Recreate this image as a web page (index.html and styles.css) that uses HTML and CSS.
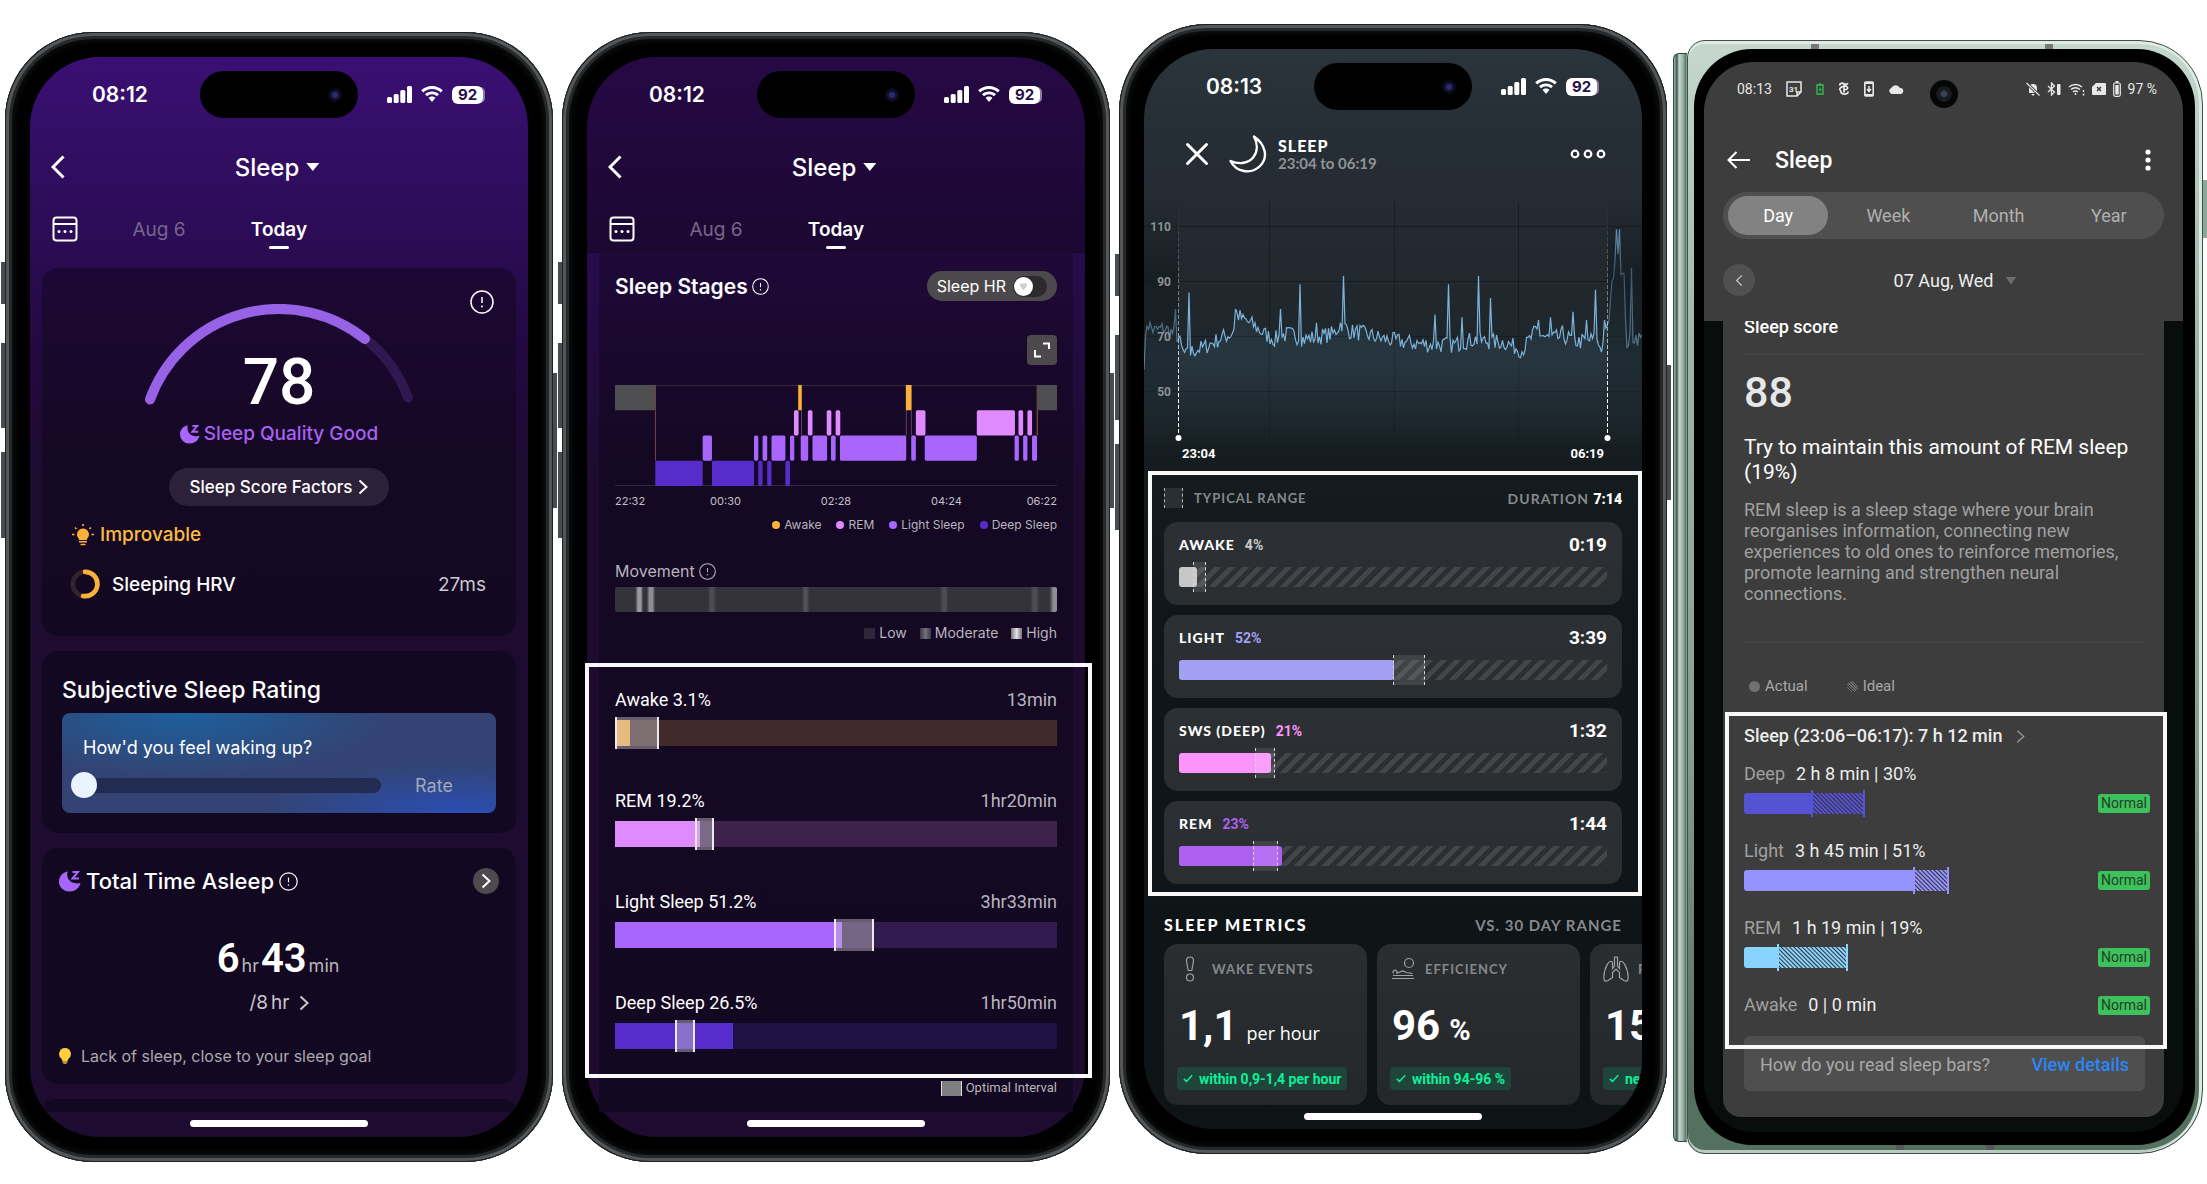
FILE: index.html
```html
<!DOCTYPE html>
<html lang="en">
<head>
  <meta charset="UTF-8">
  <meta name="viewport" content="width=device-width, initial-scale=1.0">
  <title>Sleep tracking comparison</title>
  <link rel="stylesheet" href="styles.css">
</head>
<body>
  <!-- Shared icons -->
  <svg class="sprite" aria-hidden="true">
    <symbol id="signal" viewBox="0 0 25 17">
      <rect x="0" y="11" width="5" height="6" rx="1.5"/><rect x="6.700" y="8" width="5" height="9" rx="1.5"/><rect x="13.300" y="4" width="5" height="13" rx="1.5"/><rect x="20" y="0" width="5" height="17" rx="1.5"/>
    </symbol>
    <symbol id="wifi" viewBox="0 0 22 17">
      <path d="M11 0C6.800 0 3 1.600.200 4.300l2 2.100C4.500 4.200 7.600 2.900 11 2.900s6.500 1.300 8.800 3.500l2-2.100C19 1.600 15.200 0 11 0z"/>
      <path d="M11 5.400c-2.700 0-5.200 1-7 2.800l2.100 2.100c1.300-1.200 3-2 4.900-2s3.600.800 4.900 2L18 8.200c-1.800-1.800-4.300-2.800-7-2.800z"/>
      <path d="M11 10.600c-1.300 0-2.500.500-3.300 1.400L11 16l3.300-4c-.800-.900-2-1.400-3.300-1.400z"/>
    </symbol>
    <symbol id="info" viewBox="0 0 24 24">
      <circle cx="12" cy="12" r="11" fill="none" stroke="currentColor" stroke-width="1.500"/><path d="M12 7v6" stroke="currentColor" stroke-width="1.500"/><circle cx="12" cy="16.500" r="1" fill="currentColor"/>
    </symbol>
    <symbol id="chevron" viewBox="0 0 10 16">
      <path d="M1.500 1.500L8.500 8l-7 6.500" fill="none" stroke="currentColor" stroke-width="2"/>
    </symbol>
    <symbol id="back" viewBox="0 0 14 24">
      <path d="M12.500 1.500L2 12l10.500 10.500" fill="none" stroke="currentColor" stroke-width="3"/>
    </symbol>
    <symbol id="calendar" viewBox="0 0 26 26">
      <rect x="1.500" y="1.500" width="23" height="23" rx="3" fill="none" stroke="currentColor" stroke-width="2"/><path d="M2 8h22" stroke="currentColor" stroke-width="2"/>
      <circle cx="7" cy="15.500" r="1.500" fill="currentColor"/><circle cx="13" cy="15.500" r="1.500" fill="currentColor"/><circle cx="19" cy="15.500" r="1.500" fill="currentColor"/>
    </symbol>
    <symbol id="moon-z" viewBox="0 0 22 22">
      <path d="M8.500 1.500C3.500 2.500 0 6.500 0 11.500A10 10 0 0 0 10.500 21.500c5.500 0 9.500-3 11-8.500-6 1.500-15-1-13-11.500z" fill="currentColor"/><path d="M13.500 2h5.500l-5.500 6.500H20" fill="none" stroke="currentColor" stroke-width="2"/>
    </symbol>
    <symbol id="tick" viewBox="0 0 12 10">
      <path d="M1 5.500L4.200 8.500 11 1" fill="none" stroke="currentColor" stroke-width="1.800"/>
    </symbol>
  </svg>

  <main class="gallery">

    <!-- Phone 1: score -->
    <article class="phone">
      <div class="screen screen-violet clip">
        <div class="status">
          <span class="clock">08:12</span>
          <span class="island"><i class="lens"></i></span>
          <span class="status-icons">
            <svg class="ic-signal"><use href="#signal"/></svg>
            <svg class="ic-wifi"><use href="#wifi"/></svg>
            <span class="battery">92</span>
          </span>
        </div>
        <header class="nav">
          <button class="plain" aria-label="Back"><svg class="ic-back"><use href="#back"/></svg></button>
          <h1><button class="plain nav-title">Sleep <i class="caret"></i></button></h1>
        </header>
        <nav class="days">
          <button class="plain" aria-label="Calendar"><svg class="ic-calendar"><use href="#calendar"/></svg></button>
          <a href="#" class="day">Aug 6</a>
          <a href="#" class="day day-active">Today</a>
        </nav>

        <div class="cards">
          <section class="card score-card">
            <button class="plain score-info" aria-label="About the score"><svg class="ic-info-l"><use href="#info"/></svg></button>
            <svg class="gauge" viewBox="0 0 270 102">
              <path d="M6 95.500A137.500 137.500 0 0 1 264 93.500" stroke="#2f1750"/>
              <path d="M6 95.500A137.500 137.500 0 0 1 221 35" stroke="#9862e6"/>
            </svg>
            <strong class="score">78</strong>
            <p class="quality"><svg class="ic-moon"><use href="#moon-z"/></svg>Sleep Quality Good</p>
            <button class="factors">Sleep Score Factors <svg class="ic-chevron"><use href="#chevron"/></svg></button>
            <p class="improve">
              <svg class="ic-bulb" viewBox="0 0 22 22"><path d="M11 4.500a6 6 0 0 0-4 10.400V16h8v-1.100a6 6 0 0 0-4-10.400z" fill="#fbb03b"/><path d="M7 17.800h8M8.500 20.500h5M0 10.500h2.500M19.500 10.500H22M3 3.500l1.500 1.500M19 3.500L17.500 5M11 0v2" stroke="#fbb03b" stroke-width="1.600"/></svg>
              Improvable
            </p>
            <p class="hrv">
              <svg class="ic-ring" viewBox="0 0 32 32" fill="none" stroke-width="5"><circle cx="16" cy="16" r="13" stroke="#32242a"/><path d="M16 3a13 13 0 1 1-2 25.800" stroke="#fbb03b" stroke-linecap="round"/></svg>
              <span>Sleeping HRV</span>
              <span class="hrv-value">27ms</span>
            </p>
          </section>

          <section class="card rating-card">
            <h2>Subjective Sleep Rating</h2>
            <form class="rating">
              <label for="waking">How'd you feel waking up?</label>
              <div class="rating-row">
                <input type="range" id="waking" min="0" max="10" value="0">
                <button type="button" class="plain rate">Rate</button>
              </div>
            </form>
          </section>

          <section class="card asleep-card">
            <div class="asleep-head">
              <svg class="ic-moon"><use href="#moon-z"/></svg>
              <h2>Total Time Asleep</h2>
              <svg class="ic-info-m"><use href="#info"/></svg>
              <button class="more" aria-label="Open"><svg class="ic-chevron"><use href="#chevron"/></svg></button>
            </div>
            <p class="asleep"><b>6</b><small>hr</small><b>43</b><small>min</small></p>
            <p class="goal">/8<span>hr</span><svg class="ic-chevron"><use href="#chevron"/></svg></p>
            <p class="tip"><svg class="ic-tip" viewBox="0 0 12 16"><path d="M6 0a6 6 0 0 0-3.500 10.800L3.500 13h5l1-2.200A6 6 0 0 0 6 0z" fill="#ffcf3e"/><path d="M3.500 13h5v1.500L7 16H5l-1.500-1.500z" fill="#c98b35"/></svg>Lack of sleep, close to your sleep goal</p>
          </section>
          <section class="card card-stub"></section>
        </div>
        <div class="home"></div>
      </div>
    </article>

    <!-- Phone 2: stages -->
    <article class="phone">
      <div class="screen screen-dark-violet">
        <div class="status">
          <span class="clock">08:12</span>
          <span class="island"><i class="lens"></i></span>
          <span class="status-icons">
            <svg class="ic-signal"><use href="#signal"/></svg>
            <svg class="ic-wifi"><use href="#wifi"/></svg>
            <span class="battery">92</span>
          </span>
        </div>
        <header class="nav">
          <button class="plain" aria-label="Back"><svg class="ic-back"><use href="#back"/></svg></button>
          <h1><button class="plain nav-title">Sleep <i class="caret"></i></button></h1>
        </header>
        <nav class="days">
          <button class="plain" aria-label="Calendar"><svg class="ic-calendar"><use href="#calendar"/></svg></button>
          <a href="#" class="day">Aug 6</a>
          <a href="#" class="day day-active">Today</a>
        </nav>

        <div class="sheet-wrap">
          <section class="sheet">
            <div class="sheet-head">
              <h2>Sleep Stages</h2>
              <svg class="ic-info-s"><use href="#info"/></svg>
              <label class="hr-toggle" for="hr">Sleep HR <input type="checkbox" id="hr"></label>
            </div>
            <button class="expand" aria-label="Expand chart"><svg viewBox="0 0 16 16"><path d="M9 1.500h6V7M1 8v6.500h6" fill="none" stroke="#fff" stroke-width="2"/></svg></button>
            <svg id="hypnogram" class="hypnogram" viewBox="0 0 1240 248" preserveAspectRatio="none"></svg>
            <div class="times"><span>22:32</span><span>00:30</span><span>02:28</span><span>04:24</span><span>06:22</span></div>
            <ul class="legend">
              <li><i class="dot awake"></i>Awake</li>
              <li><i class="dot rem"></i>REM</li>
              <li><i class="dot light"></i>Light Sleep</li>
              <li><i class="dot deep"></i>Deep Sleep</li>
            </ul>
            <h3 class="movement-title">Movement <svg class="ic-info-s"><use href="#info"/></svg></h3>
            <div class="movement"></div>
            <ul class="legend legend-move">
              <li><i class="sq low"></i>Low</li>
              <li><i class="sq moderate"></i>Moderate</li>
              <li><i class="sq high"></i>High</li>
            </ul>

            <div class="frame frame-stages">
              <div class="stage">
                <span>Awake 3.1%</span><span class="stage-time">13min</span>
                <div class="bar bar-awake"><i class="fill" style="width: 3.3%"></i><i class="range" style="left: 0%; width: 10%"></i></div>
              </div>
              <div class="stage">
                <span>REM 19.2%</span><span class="stage-time">1hr20min</span>
                <div class="bar bar-rem"><i class="fill" style="width: 19.3%"></i><i class="range" style="left: 18.1%; width: 4.4%"></i></div>
              </div>
              <div class="stage">
                <span>Light Sleep 51.2%</span><span class="stage-time">3hr33min</span>
                <div class="bar bar-light"><i class="fill" style="width: 51.4%"></i><i class="range" style="left: 49.6%; width: 9%"></i></div>
              </div>
              <div class="stage">
                <span>Deep Sleep 26.5%</span><span class="stage-time">1hr50min</span>
                <div class="bar bar-deep"><i class="fill" style="width: 26.6%"></i><i class="range" style="left: 13.6%; width: 4.4%"></i></div>
              </div>
            </div>
            <p class="optimal"><i></i>Optimal Interval</p>
          </section>
        </div>
        <div class="home"></div>
      </div>
    </article>

    <!-- Phone 3: heart rate and metrics -->
    <article class="phone phone-raised">
      <div class="screen screen-slate clip">
        <div class="status">
          <span class="clock">08:13</span>
          <span class="island"><i class="lens"></i></span>
          <span class="status-icons">
            <svg class="ic-signal"><use href="#signal"/></svg>
            <svg class="ic-wifi"><use href="#wifi"/></svg>
            <span class="battery">92</span>
          </span>
        </div>
        <header class="activity">
          <button class="plain" aria-label="Close"><svg class="ic-close" viewBox="0 0 24 24"><path d="M2.500 2.500l19 19M21.500 2.500l-19 19" stroke="#fff" stroke-width="3" stroke-linecap="round"/></svg></button>
          <svg class="ic-crescent" viewBox="0 0 38 38"><path d="M25 1.500C36 9 40 22 31 31 22 40 7 37 1.500 26 11 30 20 28 24.500 22 29 16 28.500 8 25 1.500z" fill="none" stroke="#fff" stroke-width="2.400" stroke-linejoin="round"/></svg>
          <div>
            <h1>SLEEP</h1>
            <p>23:04 to 06:19</p>
          </div>
          <button class="plain menu" aria-label="Menu"><svg class="ic-dots" viewBox="0 0 36 10" fill="none" stroke="#fff" stroke-width="2.200"><circle cx="5" cy="5" r="3.300"/><circle cx="18" cy="5" r="3.300"/><circle cx="31" cy="5" r="3.300"/></svg></button>
        </header>
        <svg class="heart" viewBox="0 0 498 258">
          <defs>
            <linearGradient id="fade" gradientUnits="userSpaceOnUse" x1="0" y1="5" x2="0" y2="236"><stop offset="0" stop-color="#fff" stop-opacity="0"/><stop offset=".5" stop-color="#fff" stop-opacity=".5"/><stop offset=".8" stop-color="#fff"/></linearGradient>
            <linearGradient id="area" x1="0" y1="0" x2="0" y2="1"><stop offset="0" stop-color="#5f9cc4" stop-opacity=".02"/><stop offset=".6" stop-color="#5f9cc4" stop-opacity=".13"/><stop offset="1" stop-color="#5f9cc4" stop-opacity=".02"/></linearGradient>
            <linearGradient id="shade" x1="0" y1="0" x2="0" y2="1"><stop offset="0" stop-color="#12191d" stop-opacity="0"/><stop offset=".3" stop-color="#12191d" stop-opacity=".6"/><stop offset="1" stop-color="#12191d" stop-opacity=".1"/></linearGradient>
          </defs>
          <path class="grid" d="M0 24.500h498M0 79.500h498M0 134.500h498M0 189.500h498M125.500 0v242M250.500 0v242M374.500 0v242"/>
          <path id="heart-area" fill="url(#area)"/>
          <path id="heart-line" class="heart-line"/>
          <path d="M0 0h34v242H0zM464 0h34v242h-34z" fill="url(#shade)"/>
          <g class="axis"><text x="27" y="29">110</text><text x="27" y="84">90</text><text x="27" y="139">70</text><text x="27" y="194">50</text></g>
          <path class="mark" d="M34.500 5V236"/>
          <path class="mark" d="M463.500 5V236"/>
          <circle cx="34.500" cy="236" r="3" fill="#fff"/><circle cx="463.500" cy="236" r="3" fill="#fff"/>
          <text class="mark-time" x="38" y="256">23:04</text><text class="mark-time end" x="460" y="256">06:19</text>
        </svg>

        <section class="frame frame-typical">
          <div class="typical-head"><i class="swatch"></i><span>TYPICAL RANGE</span><span class="duration">DURATION <b>7:14</b></span></div>
          <div class="zone">
            <b class="zone-name">AWAKE</b><b class="pct pct-awake">4%</b><b class="zone-time">0:19</b>
            <div class="track"><i class="level level-awake" style="width: 4.2%"></i><i class="typical" style="left: 3.2%; width: 3%"></i></div>
          </div>
          <div class="zone">
            <b class="zone-name">LIGHT</b><b class="pct pct-light">52%</b><b class="zone-time">3:39</b>
            <div class="track"><i class="level level-light" style="width: 50.3%"></i><i class="typical" style="left: 49.9%; width: 7.5%"></i></div>
          </div>
          <div class="zone">
            <b class="zone-name">SWS (DEEP)</b><b class="pct pct-sws">21%</b><b class="zone-time">1:32</b>
            <div class="track"><i class="level level-sws" style="width: 21.4%"></i><i class="typical" style="left: 17.8%; width: 4.7%"></i></div>
          </div>
          <div class="zone">
            <b class="zone-name">REM</b><b class="pct pct-rem">23%</b><b class="zone-time">1:44</b>
            <div class="track"><i class="level level-rem" style="width: 24.1%"></i><i class="typical" style="left: 17.3%; width: 5.8%"></i></div>
          </div>
        </section>

        <section class="metrics">
          <div class="metrics-head"><h2>SLEEP METRICS</h2><span>VS. 30 DAY RANGE</span></div>
          <div class="metric-list">
            <div class="metric">
              <h3><svg viewBox="0 0 26 26"><path d="M13 1c-2.500 0-3.700 1.500-3.500 4l1.700 9.500h3.600L16.500 5c.200-2.500-1-4-3.500-4z"/><circle cx="13" cy="21.500" r="3.500"/></svg>WAKE EVENTS</h3>
              <p class="metric-value">1,1 <small>per hour</small></p>
              <span class="badge"><svg><use href="#tick"/></svg>within 0,9-1,4 per hour</span>
            </div>
            <div class="metric">
              <h3><svg viewBox="0 0 26 26"><circle cx="19" cy="7" r="4.500"/><path d="M2 22.500h22M3 19.500h20M3.500 17.500a2 2 0 1 1 3 0l6-2.500 4 1.500 6 1"/></svg>EFFICIENCY</h3>
              <p class="metric-value">96 <small class="unit">%</small></p>
              <span class="badge"><svg><use href="#tick"/></svg>within 94-96 %</span>
            </div>
            <div class="metric">
              <h3><svg viewBox="0 0 26 26"><path d="M11.500 1v9l-2 2.500V7c0-2.500-3-2.500-5 1C2 12.500.500 18 1 23c.200 2.500 2 2.500 4 1.500l4.500-3v-5l3.500-3.500 3.500 3.500v5l4.500 3c2 1 3.800 1 4-1.500.500-5-1-10.500-3.500-15-2-3.500-5-3.500-5-1v5.500l-2-2.500V1z"/></svg>RESP. RATE</h3>
              <p class="metric-value">15</p>
              <span class="badge"><svg><use href="#tick"/></svg>near</span>
            </div>
          </div>
        </section>
        <div class="home"></div>
      </div>
    </article>

    <!-- Phone 4: foldable -->
    <article class="fold">
      <div class="hinge"></div>
      <div class="fold-body">
        <div class="bezel">
          <div class="fold-screen">
            <header class="fold-top">
              <div class="fold-status">
                <span>08:13</span>
                <svg viewBox="0 0 16 16" class="fs fs-cal"><path d="M1 1h14v10l-4 4H1zM15 11h-4v4" fill="none" stroke="#e8e8e8" stroke-width="1.500"/><text x="3" y="11" font-size="8" font-weight="700" fill="#e8e8e8">31</text></svg>
                <svg viewBox="0 0 8 12" class="fs fs-charge"><path d="M1 2h6v9H1zM3 1h2" fill="none" stroke="#35c24f" stroke-width="1.300"/><path d="M5 3.500L2.500 7H4l-.500 2.500L6 6H4.500z" fill="#35c24f"/></svg>
                <svg viewBox="0 0 12 16" class="fs fs-t" fill="none" stroke="#e8e8e8" stroke-width="2"><path d="M1 4c0-3 3-3 5-2s4 1 4-1M1 9c0-3 3-4 8-4.500M6 3v9M2 9c0 6 8 6 9 2M9 5c3 3-1 4-3 4"/></svg>
                <svg viewBox="0 0 10 16" class="fs fs-phone"><rect x=".800" y="1" width="8.400" height="14" rx="1" fill="none" stroke="#e8e8e8" stroke-width="1.600"/><path d="M5 5v5M3 8l2 2.500L7 8" fill="none" stroke="#e8e8e8" stroke-width="1.500"/><path d="M1 1h8v2H1zM1 13h8v2H1z" fill="#e8e8e8"/></svg>
                <svg viewBox="0 0 16 10" class="fs fs-cloud"><path d="M3.500 10a3.200 3.200 0 0 1-.300-6A5 5 0 0 1 12 4a3 3 0 0 1 .500 6z" fill="#e8e8e8"/></svg>
                <i class="punch"></i>
                <span class="fold-status-right">
                  <svg viewBox="0 0 14 14" class="fs fs-bell"><path d="M3 11V6c0-2.500 1.500-4 4-4s4 1.500 4 4v5zM5.500 12h3a1.500 1.500 0 0 1-3 0z" fill="#e8e8e8"/><path d="M.500 1l13 12.500" stroke="#3d3d3d" stroke-width="3"/><path d="M.500 1l13 12.500" stroke="#e8e8e8" stroke-width="1.200"/></svg>
                  <svg viewBox="0 0 14 14" class="fs fs-bt"><path d="M1 4l6.500 6L4.500 13V1l3 3L1 10" fill="none" stroke="#e8e8e8" stroke-width="1.300"/><rect x="10" y="2" width="3.500" height="11" rx="1" fill="#e8e8e8"/></svg>
                  <svg viewBox="0 0 17 14" class="fs fs-wifi" fill="none" stroke="#e8e8e8" stroke-width="1.500"><path d="M1 5a10 10 0 0 1 13 0M3 7.500a7 7 0 0 1 9 0M5 10a4 4 0 0 1 5 0"/><path d="M7.500 11v2M15.500 8v2M15.500 11.500v2"/></svg>
                  <svg viewBox="0 0 14 12" class="fs fs-sim"><path d="M4 0h9a1 1 0 0 1 1 1v10a1 1 0 0 1-1 1H1a1 1 0 0 1-1-1V4z" fill="#e8e8e8"/><path d="M5 4l4 4M9 4L5 8" stroke="#3d3d3d" stroke-width="1.500"/></svg>
                  <svg viewBox="0 0 8 16" class="fs fs-batt"><rect x=".700" y="2" width="6.600" height="13.300" rx="1.500" fill="none" stroke="#e8e8e8" stroke-width="1.200"/><path d="M2.300 4h3.400v9.500H2.300zM2.500 0h3v2h-3z" fill="#e8e8e8"/></svg>
                  97 %
                </span>
              </div>
              <div class="fold-nav">
                <button class="plain" aria-label="Back"><svg class="ic-arrow" viewBox="0 0 23 18"><path d="M23 9H1.500M9.500 1L1.500 9l8 8" fill="none" stroke="#fff" stroke-width="2"/></svg></button>
                <h1>Sleep</h1>
                <button class="plain kebab" aria-label="More"><svg viewBox="0 0 6 22" fill="#fff"><circle cx="3" cy="3" r="2.600"/><circle cx="3" cy="11" r="2.600"/><circle cx="3" cy="19" r="2.600"/></svg></button>
              </div>
              <div class="segments">
                <button class="segment-active">Day</button>
                <button>Week</button>
                <button>Month</button>
                <button>Year</button>
              </div>
              <div class="date-row">
                <button class="prev" aria-label="Previous day"><svg viewBox="0 0 10 16"><path d="M8.500 1.500L2 8l6.500 6.500" fill="none" stroke="#ccc" stroke-width="1.500"/></svg></button>
                <button class="plain date">07 Aug, Wed <i></i></button>
              </div>
            </header>
            <section class="report">
              <div class="report-head"><h2>Sleep score</h2></div>
              <hr>
              <strong class="report-score">88</strong>
              <h3>Try to maintain this amount of REM sleep (19%)</h3>
              <p class="report-text">REM sleep is a sleep stage where your brain reorganises information, connecting new experiences to old ones to reinforce memories, promote learning and strengthen neural connections.</p>
              <hr class="hr-low">
              <ul class="report-legend"><li><i></i>Actual</li><li><i class="ideal"></i>Ideal</li></ul>
              <div class="frame frame-bars">
                <h4><a href="#">Sleep (23:06–06:17): 7 h 12 min <svg viewBox="0 0 10 16"><path d="M1.500 1.500L8.500 8l-7 6.500" fill="none" stroke="#999" stroke-width="1.500"/></svg></a></h4>
                <div class="phase phase-deep">
                  <p><span>Deep</span>2 h 8 min | 30%</p>
                  <div class="phase-bar"><i class="actual" style="width: 16.7%"></i><i class="hatch" style="width: 13%"></i><em>Normal</em></div>
                </div>
                <div class="phase phase-light">
                  <p><span>Light</span>3 h 45 min | 51%</p>
                  <div class="phase-bar"><i class="actual" style="width: 41.9%"></i><i class="hatch" style="width: 8.7%"></i><em>Normal</em></div>
                </div>
                <div class="phase phase-rem">
                  <p><span>REM</span>1 h 19 min | 19%</p>
                  <div class="phase-bar"><i class="actual" style="width: 8.4%"></i><i class="hatch" style="width: 17.1%"></i><em>Normal</em></div>
                </div>
                <div class="phase phase-awake">
                  <p><span>Awake</span>0 | 0 min</p><em>Normal</em>
                </div>
              </div>
              <div class="help"><span>How do you read sleep bars?</span><a href="#">View details</a></div>
            </section>
          </div>
        </div>
      </div>
    </article>
  </main>

  <script src="charts.js"></script>
</body>
</html>
```

FILE: styles.css
```css
* {
  box-sizing: border-box;
}

body {
  margin: 0;
  background: #fff;
  color: #fff;
  font-family: Inter, sans-serif;
}

h1, h2, h3, h4, p, ul {
  margin: 0;
  padding: 0;
  font-weight: 500;
}

ul {
  list-style: none;
}

a {
  color: inherit;
  text-decoration: none;
}

i, em {
  font-style: normal;
}

svg {
  display: block;
  flex: none;
}

button {
  font: inherit;
  color: inherit;
  border: none;
  cursor: pointer;
}

.plain {
  padding: 0;
  background: none;
}

.sprite {
  position: absolute;
  width: 0;
  height: 0;
}

.gallery {
  display: grid;
  grid-template-columns: 548fr 548fr 548fr 527fr;
  gap: 9px;
  align-items: start;
  padding: 32px 4px 22px 5px;
}

/* Phone body */
.phone {
  position: relative;
  min-width: 0;
  padding: 25px;
  border-radius: 88px;
  background: #000;
  box-shadow: inset 0 0 0 1px #1d1f20, inset 0 0 0 4px #55585a, inset 0 0 0 7px #26292a, inset 0 0 6px 9px #101112;
}

.phone::before, .phone::after {
  content: "";
  position: absolute;
  width: 4px;
}

.phone::before {
  left: -4px;
  top: 230px;
  height: 276px;
  background: linear-gradient(#4a4d4f 0 42px, transparent 42px 81px, #4a4d4f 81px 166px, transparent 166px 190px, #4a4d4f 190px);
}

.phone::after {
  right: -4px;
  top: 341px;
  height: 135px;
  background: #4a4d4f;
}

.phone-raised {
  margin-top: -8px;
}

.screen {
  position: relative;
  padding: 14px 0 10px;
  border-radius: 70px;
}

.clip {
  overflow: hidden;
}

.screen-violet {
  background: linear-gradient(#3a0f73, #2b0c55 180px, #22093f 300px, #1d0c30 420px);
}

.screen-dark-violet {
  background: linear-gradient(#260945, #1b0831 196px, #270c4c 196px, #1d0c30 420px);
}

.screen-slate {
  padding-bottom: 9px;
  background: linear-gradient(#2a343b, #252c33 120px, #1d252a 340px, #161d20 400px, #10161a 560px, #0e1315);
}

.status {
  display: grid;
  grid-template-columns: 1fr 158px 1fr;
  height: 47px;
  align-items: center;
}

.clock {
  padding-left: 62px;
  font-size: 21px;
  font-weight: 600;
}

.island {
  display: flex;
  align-items: center;
  justify-content: flex-end;
  height: 47px;
  padding-right: 16px;
  border-radius: 24px;
  background: #000;
}

.lens {
  width: 14px;
  height: 14px;
  border-radius: 50%;
  background: radial-gradient(#2d2a78 0 2px, #11102c 4px, #08080f 7px);
}

.status-icons {
  display: flex;
  align-items: center;
  gap: 9px;
  padding-left: 29px;
  fill: #fff;
}

.ic-signal {
  width: 25px;
  height: 17px;
}

.ic-wifi {
  width: 22px;
  height: 17px;
}

.battery {
  width: 31px;
  height: 18px;
  border-radius: 6px;
  background: #fff;
  box-shadow: 3px 0 0 -1px #8b7a9f;
  color: #25104a;
  font-size: 15px;
  font-weight: 700;
  line-height: 18px;
  text-align: center;
}

.nav {
  display: grid;
  grid-template-columns: 60px 1fr 60px;
  align-items: center;
  height: 40px;
  margin-top: 29px;
}

.nav > .plain {
  padding-left: 21px;
}

.ic-back {
  width: 14px;
  height: 24px;
}

.nav h1 {
  padding-right: 4px;
  text-align: center;
  font-size: 24px;
}

.nav-title {
  display: inline-flex;
  align-items: center;
  gap: 7px;
}

.caret {
  width: 13px;
  height: 8px;
  background: #fff;
  clip-path: polygon(0 0, 100% 0, 50% 100%);
}

.days {
  display: grid;
  grid-template-columns: 66px 126px 1fr 192px;
  align-items: center;
  height: 48px;
  margin-top: 18px;
  font-size: 19px;
  text-align: center;
}

.days .plain {
  padding-left: 22px;
}

.ic-calendar {
  width: 26px;
  height: 26px;
}

.day {
  color: #766689;
}

.day-active {
  position: relative;
  color: #fff;
  font-weight: 600;
}

.day-active::after {
  content: "";
  position: absolute;
  left: calc(50% - 10px);
  bottom: -8px;
  width: 20px;
  height: 3px;
  border-radius: 2px;
  background: #fff;
}

.home {
  width: 178px;
  height: 7px;
  margin: 8px auto 0;
  border-radius: 4px;
  background: #fff;
}

/* Phone 1 */
.cards {
  display: flex;
  flex-direction: column;
  gap: 15px;
  padding: 15px 12px 0;
}

.card {
  position: relative;
  padding: 20px;
  border-radius: 16px;
  background: #130821;
}

.card h2 {
  font-size: 22px;
  line-height: 28px;
}

.score-card {
  display: flex;
  flex-direction: column;
  align-items: center;
  padding: 36px 30px;
  background: linear-gradient(#1d0835, #150824 180px, #130821);
}

.score-info {
  position: absolute;
  top: 22px;
  right: 22px;
}

.ic-info-l {
  width: 24px;
  height: 24px;
}

.ic-info-m {
  width: 19px;
  height: 19px;
}

.ic-info-s {
  width: 17px;
  height: 17px;
}

.gauge {
  width: 270px;
  height: 102px;
  fill: none;
  stroke-width: 10;
  stroke-linecap: round;
}

.score {
  margin-top: -54px;
  font-family: Roboto, sans-serif;
  font-size: 64px;
  font-weight: 500;
  line-height: 62px;
}

.quality {
  display: flex;
  align-items: center;
  gap: 4px;
  margin-top: 8px;
  color: #a862f3;
  font-size: 19px;
  line-height: 24px;
}

.quality .ic-moon {
  width: 20px;
  height: 20px;
}

.ic-moon {
  width: 22px;
  height: 22px;
  color: #a866ff;
}

.ic-chevron {
  width: 10px;
  height: 16px;
}

.factors {
  display: flex;
  align-items: center;
  justify-content: center;
  gap: 6px;
  width: 220px;
  height: 38px;
  margin-top: 22px;
  padding: 0;
  border-radius: 19px;
  background: #2c2139;
  font-size: 17px;
  font-weight: 500;
}

.improve, .hrv {
  display: flex;
  align-self: stretch;
  align-items: center;
  font-size: 19px;
}

.improve {
  gap: 6px;
  margin-top: 17px;
  color: #fbbc3f;
  line-height: 24px;
}

.ic-bulb {
  width: 22px;
  height: 22px;
}

.hrv {
  gap: 12px;
  height: 32px;
  margin: 21px 0 0 -2px;
}

.ic-ring {
  width: 30px;
  height: 30px;
}

.hrv-value {
  margin-left: auto;
  color: #ccc8d0;
  font-weight: 400;
}

.rating-card {
  padding-top: 25px;
}

.rating-card h2 {
  font-size: 23px;
}

.rating {
  margin-top: 9px;
  padding: 23px 9px 15px;
  border-radius: 8px;
  background:
    radial-gradient(ellipse at 28% 0, #1c609d, transparent 45%),
    radial-gradient(ellipse at 92% 100%, #2a4fb4, transparent 35%),
    #334474;
  font-size: 18px;
}

.rating label {
  display: block;
  padding-left: 12px;
  line-height: 24px;
}

.rating-row {
  display: grid;
  grid-template-columns: 310px 1fr;
  align-items: center;
  margin-top: 12px;
}

.rating input {
  appearance: none;
  width: 100%;
  height: 26px;
  margin: 0;
  background: none;
}

.rating input::-webkit-slider-runnable-track {
  height: 15px;
  border-radius: 8px;
  background: #222c52;
}

.rating input::-webkit-slider-thumb {
  appearance: none;
  width: 26px;
  height: 26px;
  margin-top: -6px;
  border-radius: 50%;
  background: #e9f4ff;
}

.rate {
  color: #a2a8b6;
}

.asleep-card {
  padding: 19px 17px 16px;
}

.asleep-head {
  display: flex;
  align-items: center;
  gap: 5px;
}

.more {
  display: grid;
  place-items: center;
  width: 26px;
  height: 26px;
  margin-left: auto;
  padding: 0;
  border-radius: 50%;
  background: #4c4a4c;
}

.asleep {
  height: 48px;
  margin-top: 40px;
  line-height: 48px;
  text-align: center;
}

.asleep b {
  font-family: Roboto, sans-serif;
  font-size: 40px;
  font-weight: 600;
}

.asleep small {
  padding: 0 2px;
  color: #b9b5bd;
  font-size: 18px;
  font-weight: 400;
}

.goal {
  display: flex;
  align-items: center;
  justify-content: center;
  gap: 3px;
  margin-top: 8px;
  color: #c9c6cc;
  font-size: 19px;
  font-weight: 400;
  line-height: 24px;
}

.goal svg {
  margin-left: 6px;
}

.tip {
  display: flex;
  align-items: center;
  gap: 10px;
  margin-top: 29px;
  color: #aca8b0;
  font-size: 16px;
  font-weight: 400;
  line-height: 24px;
}

.ic-tip {
  width: 12px;
  height: 16px;
}

.card-stub {
  height: 13px;
  padding: 0;
  border-radius: 16px 16px 0 0;
}

/* Phone 2 */
.sheet-wrap {
  padding: 0 12px;
}

.sheet {
  padding: 18px 16px 15px;
  background: linear-gradient(#1e0938, #150824 200px, #130821);
}

.sheet-head {
  display: flex;
  align-items: center;
  gap: 4px;
  height: 30px;
}

.sheet-head h2 {
  font-size: 21px;
  font-weight: 600;
}

.hr-toggle {
  display: flex;
  align-items: center;
  gap: 7px;
  height: 30px;
  margin-left: auto;
  padding: 0 10px;
  border-radius: 15px;
  background: #4b494c;
  font-size: 16px;
}

.hr-toggle input {
  appearance: none;
  width: 34px;
  height: 21px;
  margin: 0;
  padding: 1px;
  border-radius: 11px;
  background: #2c2a2d;
}

.hr-toggle input::before {
  content: "♥";
  display: block;
  width: 19px;
  height: 19px;
  border-radius: 50%;
  background: #fff;
  color: #d0cfd0;
  font-size: 14px;
  line-height: 19px;
  text-align: center;
}

.expand {
  display: grid;
  place-items: center;
  width: 30px;
  height: 30px;
  margin: 34px 0 20px auto;
  padding: 0;
  border-radius: 4px;
  background: #4b494c;
}

.expand svg {
  width: 16px;
  height: 16px;
}

.hypnogram {
  width: 100%;
  height: 101px;
}

.times {
  display: grid;
  grid-template-columns: 1fr 2fr 2fr 2fr 1fr;
  margin-top: 7px;
  color: #c4c0c8;
  font-size: 11px;
  line-height: 16px;
  text-align: center;
}

.times span:first-child {
  text-align: left;
}

.times span:last-child {
  text-align: right;
}

.legend {
  display: flex;
  justify-content: flex-end;
  gap: 15px;
  margin-top: 7px;
  color: #b9b5bd;
  font-size: 12px;
  line-height: 18px;
}

.legend li {
  display: flex;
  align-items: center;
  gap: 4px;
  font-weight: 400;
}

.dot {
  width: 8px;
  height: 8px;
  border-radius: 50%;
}

.awake { background: #fbb03b; }
.rem { background: #e08aff; }
.light { background: #a866ff; }
.deep { background: #562dcb; }

.movement-title {
  display: flex;
  align-items: center;
  gap: 4px;
  margin-top: 26px;
  color: #b9b5bd;
  font-size: 16px;
  font-weight: 400;
  line-height: 22px;
}

.movement {
  height: 25px;
  margin-top: 5px;
  border-radius: 2px;
  background:
    linear-gradient(90deg, transparent 4.600%, #9a989d 5.200% 5.800%, transparent 6.400% 7.200%, #8f8d92 7.800% 8.500%, transparent 9.100%),
    linear-gradient(90deg, transparent 21%, #4d4c50 21.600% 22.200%, transparent 23% 42.300%, #515054 42.800% 43.400%, transparent 44% 73.500%, #4d4c50 74.200% 74.800%, transparent 75.400% 94%, #4d4c50 94.600% 95.300%, transparent 96% 98.300%, #8f8d92 99.200%),
    #343339;
}

.legend-move {
  gap: 13px;
  margin-top: 12px;
  font-size: 14px;
}

.sq {
  width: 11px;
  height: 11px;
}

.low { background: #2e2739; }
.moderate { background: linear-gradient(90deg, #3c3646, #75717b, #3c3646); }
.high { background: linear-gradient(90deg, #77737c, #e3e2e5, #77737c); }

/* White outline round the part being compared */
.frame {
  position: relative;
  border: 4px solid #f8f8f8;
}

.frame-stages {
  display: flex;
  flex-direction: column;
  gap: 44px;
  margin: 21px -35px 0 -30px;
  padding: 22px 31px 25px 26px;
  font-family: Roboto, sans-serif;
  font-size: 18px;
  line-height: 22px;
}

.stage {
  display: grid;
  grid-template-columns: 1fr auto;
  row-gap: 9px;
}

.stage-time {
  color: #b9b5bd;
}

.bar {
  position: relative;
  grid-column: 1 / -1;
  height: 26px;
}

.fill {
  display: block;
  height: 100%;
}

.range {
  position: absolute;
  top: -3px;
  bottom: -3px;
  border: solid #eceaee;
  border-width: 0 2px;
  background: rgba(200, 195, 205, .45);
}

.bar-awake { background: #432a2a; }
.bar-awake .fill { background: #ffb43c; }
.bar-rem { background: #3d224d; }
.bar-rem .fill { background: #e08aff; }
.bar-light { background: #321b4e; }
.bar-light .fill { background: #a866ff; }
.bar-deep { background: #211043; }
.bar-deep .fill { background: #562dcb; }

.optimal {
  display: flex;
  align-items: center;
  justify-content: flex-end;
  gap: 4px;
  margin-top: 1px;
  color: #b9b5bd;
  font-family: Roboto, sans-serif;
  font-size: 13px;
  font-weight: 400;
  line-height: 18px;
}

.optimal i {
  width: 21px;
  height: 15px;
  border: solid #e0dfe2;
  border-width: 0 1px;
  background: #7f7e81;
}

/* Phone 3 */
.activity {
  display: flex;
  align-items: center;
  height: 40px;
  margin-top: 24px;
  padding: 0 36px 0 41px;
}

.ic-close {
  width: 24px;
  height: 24px;
}

.ic-crescent {
  width: 38px;
  height: 38px;
  margin: 0 11px 0 20px;
}

.activity h1 {
  font-family: Lato, sans-serif;
  font-size: 16px;
  font-weight: 900;
  line-height: 17px;
  letter-spacing: 1px;
}

.activity p {
  color: #8f9396;
  font-family: Lato, sans-serif;
  font-size: 15px;
  font-weight: 700;
  line-height: 18px;
}

.menu {
  margin-left: auto;
}

.ic-dots {
  width: 36px;
  height: 10px;
}

.heart {
  width: 100%;
  margin-top: 28px;
  font-family: Roboto, sans-serif;
  font-weight: 700;
}

.grid {
  fill: none;
  stroke: #12181b;
  stroke-opacity: .7;
}

.heart-line {
  fill: none;
  stroke: #7cb3d9;
  stroke-width: 1.2;
}

.axis {
  fill: #8b9195;
  font-size: 12px;
  text-anchor: end;
}

.mark {
  fill: none;
  stroke: url(#fade);
  stroke-dasharray: 4 2;
}

.mark-time {
  fill: #fff;
  font-size: 13px;
}

.end {
  text-anchor: end;
}

.frame-typical {
  display: grid;
  gap: 10px;
  margin: 11px 0 0 4px;
  padding: 13px 16px 8px 12px;
}

.typical-head {
  display: flex;
  align-items: center;
  height: 20px;
  margin-bottom: 4px;
  color: #85898c;
  font-family: Lato, sans-serif;
  font-size: 13px;
  font-weight: 700;
  letter-spacing: 1px;
}

.swatch {
  width: 19px;
  height: 20px;
  margin-right: 11px;
  border: dashed #b5b8ba;
  border-width: 0 1px;
  background: #2a2f33;
}

.duration {
  margin-left: auto;
  font-size: 14px;
}

.duration b {
  color: #fff;
  font-family: Roboto, sans-serif;
  letter-spacing: 0;
}

.zone {
  display: grid;
  grid-template-columns: auto 1fr auto;
  align-items: center;
  gap: 10px 10px;
  padding: 11px 15px 18px;
  border-radius: 14px;
  background: linear-gradient(#2c2f33, #2a2e31);
  line-height: 24px;
}

.zone-name {
  font-family: Lato, sans-serif;
  font-size: 14px;
  font-weight: 900;
  letter-spacing: 1px;
}

.pct, .zone-time {
  font-family: Roboto, sans-serif;
}

.pct {
  font-size: 14px;
}

.pct-awake { color: #c8cacb; }
.pct-light { color: #a3a0f2; }
.pct-sws { color: #fc94fb; }
.pct-rem { color: #ae60f0; }

.zone-time {
  font-size: 19px;
}

.track {
  position: relative;
  grid-column: 1 / -1;
  height: 20px;
  border-radius: 3px;
  background: repeating-linear-gradient(135deg, #2b2f32 0 5px, #424648 5px 10px);
}

.level {
  display: block;
  height: 100%;
  border-radius: 3px;
}

.level-awake { background: #c6c6c6; }
.level-light { background: #a3a0f2; }
.level-sws { background: #fc94fb; }
.level-rem { background: #ae60f0; }

.typical {
  position: absolute;
  top: -5px;
  bottom: -5px;
  border: dashed #d5d7d8;
  border-width: 0 1px;
  background: rgba(255, 255, 255, .1);
}

.metrics {
  margin-top: 19px;
  padding-left: 20px;
  font-family: Lato, sans-serif;
}

.metrics-head {
  display: flex;
  justify-content: space-between;
  padding-right: 20px;
  color: #85898c;
  font-size: 15px;
  font-weight: 700;
  line-height: 20px;
  letter-spacing: 1px;
}

.metrics-head h2 {
  color: #fff;
  font-size: 16px;
  font-weight: 900;
  letter-spacing: 2px;
}

.metric-list {
  display: flex;
  gap: 10px;
  margin-top: 9px;
  overflow: hidden;
}

.metric {
  flex: 0 0 203px;
  padding: 12px 13px 15px;
  border-radius: 14px;
  background: linear-gradient(#2b2e31, #25282b);
}

.metric h3 {
  display: flex;
  align-items: center;
  gap: 9px;
  height: 26px;
  color: #85898c;
  font-size: 13px;
  font-weight: 700;
  letter-spacing: 1px;
  white-space: nowrap;
}

.metric h3 svg {
  width: 26px;
  height: 26px;
  fill: none;
  stroke: #a0a3a5;
  stroke-width: 1.2;
}

.metric-value {
  display: flex;
  align-items: baseline;
  gap: 9px;
  height: 48px;
  margin-top: 20px;
  padding-left: 2px;
  font-family: Roboto, sans-serif;
  font-size: 42px;
  font-weight: 700;
  line-height: 48px;
}

.metric-value small {
  font-family: "Open Sans", sans-serif;
  font-size: 18px;
  font-weight: 500;
}

.metric-value .unit {
  font-family: Roboto, sans-serif;
  font-size: 29px;
  font-weight: 700;
}

.badge {
  display: inline-flex;
  align-items: center;
  gap: 6px;
  height: 23px;
  margin-top: 17px;
  padding: 0 6px;
  border-radius: 4px;
  background: #1f4439;
  color: #0cf09a;
  font-family: Roboto, sans-serif;
  font-size: 14px;
  font-weight: 700;
  white-space: nowrap;
}

.badge svg {
  width: 10px;
  height: 9px;
}

/* Phone 4 */
.fold {
  position: relative;
  display: grid;
  grid-template-columns: 14px 1fr;
  min-width: 0;
  margin: 8px 0 0 -3px;
  font-family: Roboto, sans-serif;
}

.fold::after {
  content: "";
  position: absolute;
  right: -4px;
  top: 140px;
  width: 4px;
  height: 58px;
  background: #8fa79a;
}

.hinge {
  margin: 13px 0 12px;
  border: 1px solid #2d4a3e;
  border-right: none;
  border-radius: 6px 0 0 6px;
  background: linear-gradient(90deg, #9fb8aa, #3d594c 3px, #c9d8d0 5px, #9ab3a5 9px, #547063 12px, #b9cac1);
}

.fold-body {
  padding: 8px 7px 8px 6px;
  border: 1px solid #3b5147;
  border-radius: 18px 64px 64px 18px;
  background:
    linear-gradient(90deg, transparent 24%, #74787a 24% 25.500%, transparent 25.500% 69.500%, #74787a 69.500% 71%, transparent 71%) 0 0 / 100% 8px no-repeat,
    linear-gradient(90deg, transparent 40.500%, #54585a 40.500% 42%, transparent 42% 58%, #54585a 58% 59.500%, transparent 59.500%) 0 100% / 100% 8px no-repeat,
    linear-gradient(#c6d8ce, #9cb7a8 300px, #83a091 700px, #54705f 1050px);
  box-shadow: inset -3px 0 0 #dfeae4, inset 0 3px 0 #dfeae4, inset 0 -3px 0 #b9cac1;
}

.bezel {
  padding: 13px 12px 13px 10px;
  border-radius: 58px;
  background: #000;
}

.fold-screen {
  padding-bottom: 15px;
  border-radius: 50px;
  background: #090d0c;
}

.fold-top {
  padding: 14px 19px 25px;
  border-radius: 50px 50px 0 0;
  background: #3d3d3d;
}

.fold-status {
  position: relative;
  display: flex;
  align-items: center;
  gap: 14px;
  height: 26px;
  padding: 0 7px 0 14px;
  color: #e8e8e8;
  font-size: 14px;
}

.fold-status-right {
  display: flex;
  align-items: center;
  gap: 7px;
  margin-left: auto;
}

.fs { height: 16px; }
.fs-cal { width: 16px; }
.fs-charge { width: 8px; height: 12px; }
.fs-t { width: 12px; height: 14px; }
.fs-phone { width: 10px; }
.fs-cloud { width: 16px; height: 10px; }
.fs-bell { width: 14px; height: 14px; }
.fs-bt { width: 14px; height: 14px; }
.fs-wifi { width: 17px; height: 14px; }
.fs-sim { width: 14px; height: 12px; }
.fs-batt { width: 8px; }

.punch {
  position: absolute;
  left: calc(50% - 14px);
  top: 4px;
  width: 28px;
  height: 28px;
  border-radius: 50%;
  background: radial-gradient(#39434f 0 2px, #10161d 5px, #1c2126 7px, #050606 8px);
}

.fold-nav {
  display: flex;
  align-items: center;
  height: 30px;
  margin-top: 43px;
  padding: 0 13px 0 4px;
}

.ic-arrow {
  width: 23px;
  height: 18px;
}

.fold-nav h1 {
  margin-left: 25px;
  font-size: 23px;
}

.kebab {
  margin-left: auto;
}

.kebab svg {
  width: 6px;
  height: 22px;
}

.segments {
  display: grid;
  grid-template-columns: repeat(4, 1fr);
  height: 47px;
  margin-top: 17px;
  border-radius: 24px;
  background: #4f4f4f;
  font-size: 18px;
}

.segments button {
  margin: 4px 5px;
  border-radius: 20px;
  background: none;
  color: #b0b0b0;
}

.segments .segment-active {
  background: #828282;
  color: #fff;
}

.date-row {
  display: grid;
  grid-template-columns: 32px 1fr 32px;
  align-items: center;
  margin-top: 25px;
}

.prev {
  display: grid;
  place-items: center;
  width: 32px;
  height: 32px;
  padding: 0;
  border-radius: 50%;
  background: #505050;
}

.prev svg {
  width: 8px;
  height: 13px;
}

.date {
  position: relative;
  justify-self: center;
  color: #eee;
  font-size: 18px;
}

.date i {
  position: absolute;
  left: calc(100% + 12px);
  top: 7px;
  width: 11px;
  height: 8px;
  background: #6e6e6e;
  clip-path: polygon(0 0, 100% 0, 50% 100%);
}

.report {
  margin: 0 19px;
  padding: 0 19px 26px 21px;
  border-radius: 0 0 18px 18px;
  background: #3d3d3d;
}

.report-head {
  overflow: hidden;
}

.report h2 {
  margin-top: -6px;
  font-size: 18px;
  line-height: 24px;
}

.report hr {
  height: 1px;
  margin: 15px 0 13px;
  border: none;
  background: #474747;
}

.report .hr-low {
  margin: 38px 0 33px;
}

.report-score {
  display: block;
  color: #e6e7e8;
  font-size: 43px;
  font-weight: 500;
  line-height: 48px;
}

.report h3 {
  margin-top: 19px;
  font-size: 21px;
  font-weight: 400;
  line-height: 25px;
}

.report-text {
  margin-top: 14px;
  color: #a0a0a0;
  font-size: 18px;
  font-weight: 400;
  line-height: 21px;
}

.report-legend {
  display: flex;
  gap: 39px;
  padding-left: 5px;
  color: #a8a8a8;
  font-size: 15px;
  line-height: 20px;
}

.report-legend li {
  display: flex;
  align-items: center;
  gap: 5px;
  font-weight: 400;
}

.report-legend i {
  width: 11px;
  height: 11px;
  border-radius: 50%;
  background: #717171;
}

.report-legend .ideal {
  background: repeating-linear-gradient(45deg, #3d3d3d 0 1px, #717171 1px 2px);
}

.frame-bars {
  display: grid;
  gap: 25px;
  margin: 16px -22px 0 -19px;
  padding: 8px 13px 28px 15px;
  font-size: 18px;
  line-height: 24px;
}

.frame-bars h4 {
  margin-bottom: -11px;
  color: #ececec;
}

.frame-bars h4 a {
  display: flex;
  align-items: center;
  gap: 14px;
}

.frame-bars h4 svg {
  width: 9px;
  height: 15px;
}

.phase p {
  color: #ececec;
  font-weight: 400;
}

.phase span {
  margin-right: 11px;
  color: #a0a0a0;
}

.phase-bar {
  display: flex;
  align-items: center;
  height: 21px;
  margin-top: 7px;
}

.phase em {
  height: 19px;
  margin-left: auto;
  padding: 0 3px;
  border-radius: 3px;
  background: #3cc15b;
  color: #23402b;
  font-size: 14px;
  line-height: 19px;
}

.phase-awake {
  display: flex;
  align-items: center;
}

.phase-deep { color: #5552d3; }
.phase-light { color: #9492fd; }
.phase-rem { color: #88d4fe; }

.actual {
  height: 21px;
  border-radius: 3px 0 0 3px;
  background: currentColor;
}

.hatch {
  position: relative;
  height: 21px;
  background: repeating-linear-gradient(45deg, currentColor 0 1px, #333 2px, currentColor 3px);
}

/* End ticks of the ideal interval */
.hatch::before, .hatch::after {
  content: "";
  position: absolute;
  top: -3px;
  bottom: -3px;
  width: 2px;
  background: currentColor;
}

.hatch::before {
  left: -1px;
}

.hatch::after {
  right: 0;
}

.help {
  display: flex;
  align-items: center;
  justify-content: space-between;
  height: 55px;
  margin-top: -13px;
  padding: 2px 16px 0;
  border-radius: 6px;
  background: #4f4f4f;
  color: #a8a8a8;
  font-size: 18px;
}

.help a {
  color: #2b86f5;
  font-weight: 500;
}
```

FILE: charts.js
```js
const SVG = 'http://www.w3.org/2000/svg';

// Rows of the hypnogram: awake, REM, light, deep
const rows = {
  out: { y: 0, color: '#4e4d50' },
  awake: { y: 0, color: '#fbb03b' },
  rem: { y: 62, color: '#e08aff' },
  light: { y: 124, color: '#a866ff' },
  deep: { y: 186, color: '#562dcb' }
};

const stages = [
  ['out', 0, 113], ['deep', 113, 246], ['light', 246, 272], ['deep', 272, 390],
  ['light', 390, 402], ['deep', 402, 414], ['light', 414, 427], ['deep', 427, 439],
  ['light', 439, 478], ['deep', 478, 491], ['light', 491, 503], ['rem', 502, 515],
  ['awake', 514, 524], ['light', 521, 542], ['rem', 541, 554], ['light', 554, 595],
  ['rem', 594, 607], ['light', 606, 619], ['rem', 619, 632], ['light', 631, 817],
  ['awake', 816, 832], ['light', 831, 844], ['rem', 844, 871], ['light', 869, 1015],
  ['rem', 1015, 1122], ['light', 1121, 1133], ['rem', 1132, 1145], ['light', 1145, 1157],
  ['rem', 1157, 1170], ['light', 1170, 1184], ['out', 1185, 1240]
];

function addRect(parent, x, y, width, height, color, rx) {
  const rect = document.createElementNS(SVG, 'rect');
  rect.setAttribute('x', x);
  rect.setAttribute('y', y);
  rect.setAttribute('width', width);
  rect.setAttribute('height', height);
  rect.setAttribute('fill', color);
  rect.setAttribute('rx', rx || 0);
  parent.appendChild(rect);
}

function drawHypnogram() {
  const svg = document.getElementById('hypnogram');
  addRect(svg, 0, 0, 1240, 2, '#3a3143');
  addRect(svg, 0, 246, 1240, 2, '#3a3143');
  addRect(svg, 112, 0, 3, 186, '#6b4636');
  addRect(svg, 1183, 0, 3, 124, '#8a5a36');
  addRect(svg, 522, 62, 2, 62, '#80597e');
  addRect(svg, 816, 62, 2, 62, '#80597e');
  addRect(svg, 830, 62, 2, 62, '#80597e');
  stages.forEach(([stage, start, end]) => {
    addRect(svg, start, rows[stage].y, end - start, 62, rows[stage].color, stage === 'out' || stage === 'awake' ? 0 : 4);
  });
}

// Baseline heart rate, as [x, bpm]
const base = [
  [0, 61], [3, 75], [10, 72], [20, 73], [30, 71], [34, 70], [38, 65], [42, 63], [50, 65], [60, 66], [70, 68],
  [80, 70], [88, 71], [93, 78], [100, 76], [110, 74], [120, 71], [130, 69], [145, 71], [160, 69], [175, 70],
  [190, 71], [197, 75], [205, 72], [220, 71], [240, 69], [260, 68], [285, 67], [310, 67], [330, 69], [345, 68],
  [360, 68], [378, 65], [392, 72], [405, 69], [420, 70], [435, 68], [450, 69], [458, 66], [464, 73], [468, 88],
  [471, 99], [474, 103], [477, 93], [480, 80], [483, 68], [490, 70], [498, 69]
];

const spikes = [
  [45, 86], [92, 80], [99, 78], [137, 80], [156, 89], [173, 75], [199, 92], [216, 74], [291, 78], [304.5, 89],
  [318, 77], [335, 92], [346, 84], [394, 76], [407, 77], [419, 74], [429, 79], [442, 76], [451, 87], [460, 76],
  [473, 109], [475, 109], [478, 93], [480, 93], [487, 95], [31, 80]
];

function baseAt(x) {
  const i = base.findIndex(point => point[0] >= x);
  if (i <= 0) return base[0][1];
  const [x0, y0] = base[i - 1];
  const [x1, y1] = base[i];
  return y0 + (y1 - y0) * (x - x0) / (x1 - x0);
}

function drawHeartRate() {
  let seed = 7;
  const points = [];
  for (let x = 0; x <= 498; x += 1.5) {
    seed = (seed * 16807) % 2147483647;
    const noise = (seed / 2147483647 - 0.5) * 6;
    const spike = spikes.find(s => Math.abs(s[0] - x) <= 0.75);
    const bpm = spike ? spike[1] : baseAt(x) + noise;
    // 110 bpm sits at 24.5 and 20 bpm take 55
    points.push(`${x} ${(24.5 + (110 - bpm) * 2.75).toFixed(1)}`);
  }
  const line = 'M' + points.join('L');
  document.getElementById('heart-line').setAttribute('d', line);
  document.getElementById('heart-area').setAttribute('d', line + 'V242H0Z');
}

drawHypnogram();
drawHeartRate();
```
